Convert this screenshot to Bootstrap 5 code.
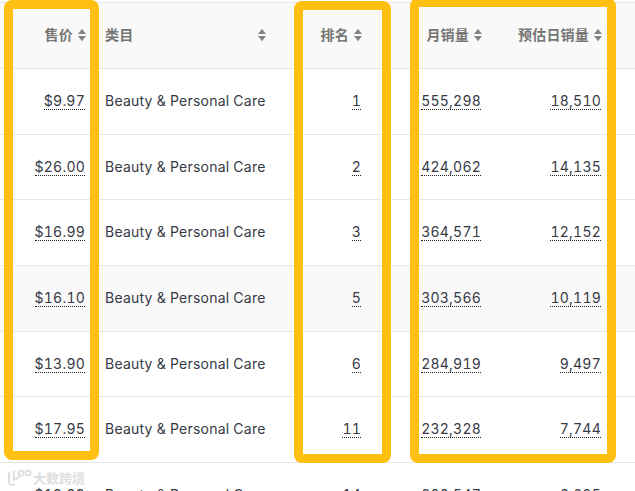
<!DOCTYPE html>
<html lang="zh">
<head>
<meta charset="utf-8">
<title>Table</title>
<link href="https://cdn.jsdelivr.net/npm/bootstrap@5.3.0/dist/css/bootstrap.min.css" rel="stylesheet">
<style>
html,body{height:491px;overflow:hidden;background:#fff}
.sheet{position:relative;height:491px;overflow:hidden;padding-top:2px;font-family:Inter,"Noto Sans CJK SC",sans-serif}
.grid-tbl{table-layout:fixed;width:660px;margin:0;font-size:14px;color:#363a45;letter-spacing:.23px;font-variant-numeric:tabular-nums;border-top:1px solid #e6e6e6;white-space:nowrap}
.grid-tbl th,.grid-tbl td{padding:0 10px;vertical-align:middle;border-bottom:1px solid #e6e6e6;background:transparent;box-shadow:none;color:inherit}
.grid-tbl td{padding-bottom:2px}
.grid-tbl thead tr{height:66px;background:#f9f9f9}
.grid-tbl tbody tr{height:65.7px}
.grid-tbl tbody tr.shade{background:#f9f9f9}
.grid-tbl th{color:#757575;font-weight:700;font-size:14px;letter-spacing:.2px;padding-bottom:2px}
.grid-tbl th.text-end{padding-right:9px}
.head-split{padding-right:1px}
.dots{display:inline-block;line-height:16px;border-bottom:1px dotted #222}
.sorter{width:8px;height:14px;margin-left:5px;vertical-align:-2px;fill:#858585}
.frame{position:absolute;border:9px solid #ffc011;border-radius:8px;pointer-events:none}
.f1{left:4px;top:0;width:95px;height:460px}
.f2{left:294px;top:1px;width:97px;height:462px}
.f3{left:410px;top:-2px;width:206px;height:465px}
.mark-wm{position:absolute;left:7px;top:468px;display:flex;align-items:center;gap:1px;color:#dedede;font-size:13px;line-height:20px;font-weight:700;letter-spacing:0}
</style>
</head>
<body>
<div class="sheet">
<table class="table grid-tbl">
<colgroup><col style="width:95px"><col style="width:182px"><col style="width:94px"><col style="width:120px"><col style="width:120px"><col style="width:49px"></colgroup>
<thead><tr>
<th class="text-end">售价<svg class="sorter" viewBox="0 0 9 14"><path d="M4.500 0 9 6H0zM0 8h9l-4.500 6z"/></svg></th>
<th><div class="d-flex justify-content-between align-items-center head-split">类目<svg class="sorter" viewBox="0 0 9 14"><path d="M4.500 0 9 6H0zM0 8h9l-4.500 6z"/></svg></div></th>
<th class="text-end">排名<svg class="sorter" viewBox="0 0 9 14"><path d="M4.500 0 9 6H0zM0 8h9l-4.500 6z"/></svg></th>
<th class="text-end">月销量<svg class="sorter" viewBox="0 0 9 14"><path d="M4.500 0 9 6H0zM0 8h9l-4.500 6z"/></svg></th>
<th class="text-end">预估日销量<svg class="sorter" viewBox="0 0 9 14"><path d="M4.500 0 9 6H0zM0 8h9l-4.500 6z"/></svg></th>
<th></th>
</tr></thead>
<tbody>
<tr><td class="text-end"><span class="dots">$9.97</span></td><td>Beauty &amp; Personal Care</td><td class="text-end"><span class="dots">1</span></td><td class="text-end"><span class="dots">555,298</span></td><td class="text-end"><span class="dots">18,510</span></td><td></td></tr>
<tr><td class="text-end"><span class="dots">$26.00</span></td><td>Beauty &amp; Personal Care</td><td class="text-end"><span class="dots">2</span></td><td class="text-end"><span class="dots">424,062</span></td><td class="text-end"><span class="dots">14,135</span></td><td></td></tr>
<tr><td class="text-end"><span class="dots">$16.99</span></td><td>Beauty &amp; Personal Care</td><td class="text-end"><span class="dots">3</span></td><td class="text-end"><span class="dots">364,571</span></td><td class="text-end"><span class="dots">12,152</span></td><td></td></tr>
<tr class="shade"><td class="text-end"><span class="dots">$16.10</span></td><td>Beauty &amp; Personal Care</td><td class="text-end"><span class="dots">5</span></td><td class="text-end"><span class="dots">303,566</span></td><td class="text-end"><span class="dots">10,119</span></td><td></td></tr>
<tr><td class="text-end"><span class="dots">$13.90</span></td><td>Beauty &amp; Personal Care</td><td class="text-end"><span class="dots">6</span></td><td class="text-end"><span class="dots">284,919</span></td><td class="text-end"><span class="dots">9,497</span></td><td></td></tr>
<tr><td class="text-end"><span class="dots">$17.95</span></td><td>Beauty &amp; Personal Care</td><td class="text-end"><span class="dots">11</span></td><td class="text-end"><span class="dots">232,328</span></td><td class="text-end"><span class="dots">7,744</span></td><td></td></tr>
<tr><td class="text-end"><span class="dots">$19.99</span></td><td>Beauty &amp; Personal Care</td><td class="text-end"><span class="dots">14</span></td><td class="text-end"><span class="dots">200,547</span></td><td class="text-end"><span class="dots">6,685</span></td><td></td></tr>
</tbody>
</table>
<div class="frame f1"></div>
<div class="frame f2"></div>
<div class="frame f3"></div>
<div class="mark-wm">
<svg width="25" height="18" viewBox="0 0 25 18" fill="none" stroke="#e0e0e0" stroke-width="2"><path d="M2 3v10c0 3 3 4 6 2"/><path d="M7 2v9c2-1 5-2 6-5"/><circle cx="14" cy="4" r="2.500"/><circle cx="21" cy="4" r="2.500"/></svg>
<span>大数跨境</span>
</div>
</div>
</body>
</html>
